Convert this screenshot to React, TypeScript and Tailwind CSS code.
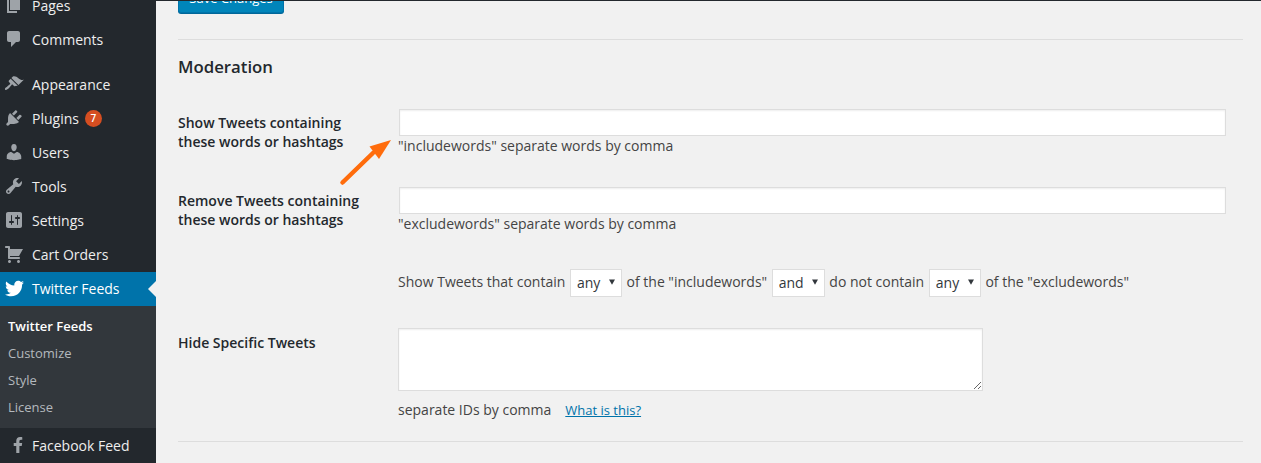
import type { ReactNode } from "react";
import { FaTwitter, FaFacebookF } from "react-icons/fa";

const icons: Record<string, string> = {
  pages: "M6 15V2h10v13H6zm-1 1h8v2H3V5h2v11z",
  comments: "M5 2h9c1.1 0 2 .9 2 2v7c0 1.1-.9 2-2 2h-2l-5 5v-5H5c-1.1 0-2-.9-2-2V4c0-1.1.9-2 2-2z",
  appearance:
    "M14.48 11.06L7.41 3.99l1.5-1.5c.5-.56 2.3-.47 3.51.32 1.21.8 1.43 1.28 2.91 2.1 1.18.64 2.45 1.26 4.45.85zm-.71.71L6.7 4.7 4.93 6.47c-.39.39-.39 1.02 0 1.41l1.06 1.06c.39.39.39 1.03 0 1.42-.6.6-1.43 1.11-2.21 1.69-.35.26-.7.53-1.01.84C1.43 13.23.4 14.91 1.2 15.7c.79.8 2.47-.23 3.83-1.59.31-.31.58-.66.84-1.01.58-.78 1.09-1.61 1.69-2.21.39-.39 1.02-.39 1.41 0l1.06 1.06c.39.39 1.02.39 1.41 0z",
  plugins:
    "M13.11 4.36L9.87 7.6 8 5.73l3.24-3.24c.35-.34 1.05-.2 1.56.32.52.51.66 1.21.31 1.55zm-8 1.77l.91-1.12 9.01 9.01-1.19.84c-.71.71-2.63 1.16-3.82 1.16H6.14L4.9 17.26c-.59.59-1.54.59-2.12 0-.59-.58-.59-1.53 0-2.12l1.24-1.24v-3.88c0-1.13.4-3.19 1.09-3.89zm7.26 3.97l3.24-3.24c.34-.35 1.04-.21 1.55.31.52.51.66 1.21.31 1.55l-3.24 3.25z",
  users:
    "M10 9.25c-2.27 0-2.73-3.44-2.73-3.44C7 4.02 7.82 2 9.97 2c2.16 0 2.98 2.02 2.71 3.81 0 0-.41 3.44-2.68 3.44zm0 2.57L12.72 10c2.39 0 4.52 2.33 4.52 4.53v2.49s-3.65 1.13-7.24 1.13c-3.65 0-7.24-1.13-7.24-1.13v-2.49c0-2.25 1.94-4.48 4.47-4.48z",
  tools:
    "M16.68 9.77c-1.34 1.34-3.3 1.67-4.95.99l-5.41 6.52c-.99.99-2.59.99-3.58 0s-.99-2.59 0-3.57l6.52-5.42c-.68-1.65-.35-3.61.99-4.95 1.28-1.28 3.12-1.62 4.72-1.06l-2.89 2.89 2.82 2.82 2.86-2.87c.53 1.58.18 3.39-1.08 4.65zM3.81 16.21c.4.39 1.04.39 1.43 0 .4-.4.4-1.04 0-1.43-.39-.4-1.03-.4-1.43 0-.39.39-.39 1.03 0 1.43z",
  settings:
    "M18 16V4c0-1.1-.9-2-2-2H4c-1.1 0-2 .9-2 2v12c0 1.1.9 2 2 2h12c1.1 0 2-.9 2-2zM8 11h1c.55 0 1 .45 1 1s-.45 1-1 1H8v1.5c0 .28-.22.5-.5.5s-.5-.22-.5-.5V13H6c-.55 0-1-.45-1-1s.45-1 1-1h1V5.5c0-.28.22-.5.5-.5s.5.22.5.5V11zm5-2h-1c-.55 0-1-.45-1-1s.45-1 1-1h1V5.5c0-.28.22-.5.5-.5s.5.22.5.5V7h1c.55 0 1 .45 1 1s-.45 1-1 1h-1v5.5c0 .28-.22.5-.5.5s-.5-.22-.5-.5V9z",
  cart: "M6 13h9c.55 0 1 .45 1 1s-.45 1-1 1H5c-.55 0-1-.45-1-1V4H2c-.55 0-1-.45-1-1s.45-1 1-1h3c.55 0 1 .45 1 1v2h13l-4 7H6v1zm-.5 3c.83 0 1.5.67 1.5 1.5S6.33 19 5.5 19 4 18.33 4 17.5 4.67 16 5.5 16zm9 0c.83 0 1.5.67 1.5 1.5s-.67 1.5-1.5 1.5-1.5-.67-1.5-1.5.67-1.5 1.5-1.5z",
};

function MenuIcon({ name }: { name: string }) {
  return (
    <svg viewBox="0 0 20 20" className="h-5 w-5 fill-[#9ea3a8]">
      <path d={icons[name]} />
    </svg>
  );
}

function MenuItem({ icon, label, badge }: { icon: string; label: string; badge?: string }) {
  return (
    <div className="flex h-[34px] items-center pb-[2px] pl-[4px] text-[#eeeeee]">
      <span className="flex w-[28px]">
        <MenuIcon name={icon} />
      </span>
      <span>{label}</span>
      {badge && (
        <span className="ml-[6px] flex h-[17px] w-[17px] items-center justify-center rounded-full bg-[#d54e21] text-[10px] font-semibold text-white">
          {badge}
        </span>
      )}
    </div>
  );
}

function Sidebar() {
  return (
    <aside className="-mt-[11px] w-[156px] shrink-0 bg-[#23282d] text-[14px]">
      <MenuItem icon="pages" label="Pages" />
      <MenuItem icon="comments" label="Comments" />
      <div className="h-[11px]" />
      <MenuItem icon="appearance" label="Appearance" />
      <MenuItem icon="plugins" label="Plugins" badge="7" />
      <MenuItem icon="users" label="Users" />
      <MenuItem icon="tools" label="Tools" />
      <MenuItem icon="settings" label="Settings" />
      <MenuItem icon="cart" label="Cart Orders" />
      <div className="relative flex h-[34px] items-center bg-[#0073aa] pb-[2px] pl-[4px] text-white">
        <span className="flex w-[28px] pl-px">
          <FaTwitter className="h-[19px] w-[19px] text-white" />
        </span>
        <span>Twitter Feeds</span>
        <span className="absolute right-0 top-[9px] h-0 w-0 border-y-[8px] border-r-[8px] border-y-transparent border-r-[#f1f1f1]" />
      </div>
      <div className="flex h-[122px] flex-col bg-[#32373c] pt-[7px] text-[13px] text-[#b4b9be]">
        <div className="flex h-[27px] items-center pl-2 font-semibold text-white">Twitter Feeds</div>
        <div className="flex h-[27px] items-center pl-2">Customize</div>
        <div className="flex h-[27px] items-center pl-2">Style</div>
        <div className="flex h-[27px] items-center pl-2">License</div>
      </div>
      <div className="flex h-[34px] items-center pl-[4px] text-[#eeeeee]">
        <span className="flex w-[28px] justify-center">
          <FaFacebookF className="h-[16px] w-[16px] text-[#9ea3a8]" />
        </span>
        <span>Facebook Feed</span>
      </div>
    </aside>
  );
}

function Select({ value, width, options }: { value: string; width: string; options: string[] }) {
  return (
    <span className={`relative inline-block ${width}`}>
      <select
        defaultValue={value}
        className="h-[28px] w-full appearance-none border border-[#dddddd] bg-white pb-[2px] pl-[6px] text-[14px] text-[#32373c]"
      >
        {options.map((o) => (
          <option key={o}>{o}</option>
        ))}
      </select>
      <svg viewBox="0 0 8 7" className="absolute right-[7px] top-[10px] h-[6px] w-[6px] fill-[#32373c]">
        <path d="M0 0h8L4 7z" />
      </svg>
    </span>
  );
}

function Row({
  label,
  labelClass,
  children,
  className,
}: {
  label?: ReactNode;
  labelClass?: string;
  children: ReactNode;
  className?: string;
}) {
  return (
    <div className={`flex ${className ?? ""}`}>
      <div className={`w-[220px] shrink-0 font-semibold leading-[19px] text-[#23282d] ${labelClass ?? ""}`}>{label}</div>
      <div className="min-w-0 flex-1">{children}</div>
    </div>
  );
}

export default function App() {
  return (
    <div
      className="flex h-[463px] w-[1261px] overflow-hidden bg-[#f1f1f1] text-[14px] text-[#444444]"
      style={{ fontFamily: '"Open Sans", sans-serif' }}
    >
      <Sidebar />
      <main className="relative flex-1 pl-[22px] pr-[18px]">
        <div className="absolute left-0 right-0 top-0 h-px bg-[#23282d]" />
        <button className="-mt-[15px] block h-[28px] w-[106px] rounded-[3px] border border-[#0073aa] bg-[#0085ba] text-[13px] text-white shadow-[0_1px_0_#006799]">
          Save Changes
        </button>
        <div className="mt-[26px] border-t border-[#dddddd]" />
        <h2 className="mt-[16px] text-[16.8px] font-semibold leading-[22px] text-[#23282d]">Moderation</h2>

        <Row label={<>Show Tweets containing<br />these words or hashtags</>} labelClass="pt-[4px]" className="mt-[31px]">
          <input type="text" className="ml-px block h-[27px] w-[827px] border border-[#dddddd] bg-white shadow-[inset_0_1px_2px_rgba(0,0,0,0.07)]" />
          <p className="leading-[19px]">"includewords" separate words by comma</p>
        </Row>

        <Row label={<>Remove Tweets containing<br />these words or hashtags</>} labelClass="pt-[4px]" className="mt-[32px]">
          <input type="text" className="ml-px block h-[27px] w-[827px] border border-[#dddddd] bg-white shadow-[inset_0_1px_2px_rgba(0,0,0,0.07)]" />
          <p className="leading-[19px]">"excludewords" separate words by comma</p>
        </Row>

        <Row className="mt-[36px]">
          <div className="flex h-[28px] items-center gap-[4.6px]">
            <span className="-mt-[4px]">Show Tweets that contain</span>
            <Select value="any" width="w-[52px]" options={["any", "all"]} />
            <span className="-mt-[4px]">of the "includewords"</span>
            <Select value="and" width="w-[53px]" options={["and", "or"]} />
            <span className="-mt-[4px]">do not contain</span>
            <Select value="any" width="w-[52px]" options={["any", "all"]} />
            <span className="-mt-[4px]">of the "excludewords"</span>
          </div>
        </Row>

        <Row label="Hide Specific Tweets" labelClass="pt-[5px]" className="mt-[31px]">
          <textarea className="block h-[63px] w-[585px] border border-[#dddddd] bg-white shadow-[inset_0_1px_2px_rgba(0,0,0,0.07)]" />
          <p className="mt-[9px] leading-[19px]">
            separate IDs by comma
            <a href="#" className="ml-[14px] text-[13px] text-[#0073aa] underline">
              What is this?
            </a>
          </p>
        </Row>

        <div className="mt-[21px] border-t border-[#dddddd]" />
        <h2 className="mt-[16px] text-[16.8px] font-semibold leading-[22px] text-[#23282d]">Misc</h2>

        {/* annotation arrow pointing at the first input */}
        <svg viewBox="0 0 60 52" className="absolute left-[179px] top-[135px] h-[52px] w-[60px]">
          <path d="M7.5 47.5L38 18" stroke="#ff6c0c" strokeWidth="4.5" strokeLinecap="round" fill="none" />
          <path d="M56 5L34.5 11.5L44 24z" fill="#ff6c0c" />
        </svg>
      </main>
    </div>
  );
}
